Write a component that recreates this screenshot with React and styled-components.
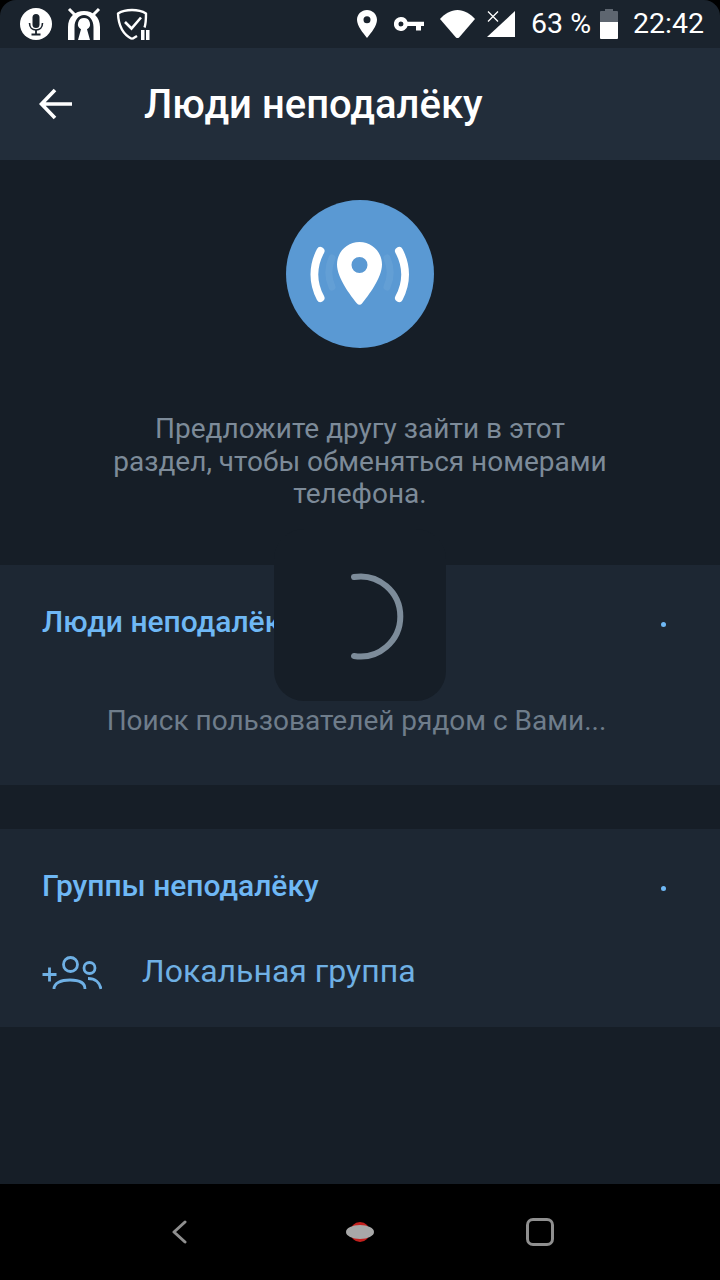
import React from 'react'
import styled, { createGlobalStyle } from 'styled-components'

const GlobalStyle = createGlobalStyle`
    html, body {
        margin: 0;
        padding: 0;
        background: #000;
    }
    * {
        box-sizing: border-box;
    }
`

const MicIcon = () => (
    <svg width="32" height="32" viewBox="0 0 32 32">
        <circle cx="16" cy="16" r="16" fill="#fff" />
        <rect x="12.500" y="6" width="7" height="14" rx="3.500" fill="#1a232d" />
        <path d="M9.500 15c0 4.500 2.800 7 6.500 7s6.500-2.500 6.500-7" fill="none" stroke="#1a232d" strokeWidth="1.600" />
        <path d="M16 22v3.500M11.500 26.500h9" stroke="#1a232d" strokeWidth="1.800" />
    </svg>
)

const KeyholeIcon = () => (
    <svg width="34" height="34" viewBox="0 0 34 34">
        <path d="M2 2l6 6M32 2l-6 6" stroke="#fff" strokeWidth="3" />
        <path fill="#fff" d="M1 33V20C1 10 8 4 17 4s16 6 16 16v13h-6.500V20c0-7-4-12-9.500-12S7.500 13 7.500 20v13z" />
        <path fill="#fff" d="M17 11a6 6 0 0 1 3 11.200L23 33H11l3-10.800A6 6 0 0 1 17 11z" />
    </svg>
)

const ShieldIcon = () => (
    <svg width="34" height="34" viewBox="0 0 34 34">
        <path d="M16 3c5 0 10 1 14 3.500 0 5 0 10-1.500 14M16 32C8 28 2.500 20 2 6.500 6 4 11 3 16 3" fill="none" stroke="#fff" strokeWidth="2.400" strokeLinejoin="round" />
        <path d="M9 15l6.500 6.500L25 10.500" fill="none" stroke="#fff" strokeWidth="2.600" />
        <path d="M16 32l5-3" stroke="#fff" strokeWidth="2.400" />
        <path d="M25 23h3.500v10H25zM30 23h3.500v10H30z" fill="#fff" />
    </svg>
)

const PinIcon = () => (
    <svg width="20" height="28" viewBox="0 0 20 28">
        <path fillRule="evenodd" fill="#fff" d="M10 0c5.500 0 10 4.400 10 9.800C20 16 14 23 10 28 6 23 0 16 0 9.800 0 4.400 4.500 0 10 0zm0 6.300a3.500 3.500 0 1 0 0 7 3.500 3.500 0 0 0 0-7z" />
    </svg>
)

const KeyIcon = () => (
    <svg width="30" height="14" viewBox="0 0 30 14">
        <path fillRule="evenodd" fill="#fff" d="M7 0a7 7 0 0 1 6.600 4.800H30V9h-3v4.500h-5V9h-8.400A7 7 0 1 1 7 0zm0 4.500a2.500 2.500 0 1 0 0 5 2.500 2.500 0 0 0 0-5z" />
    </svg>
)

const WifiIcon = () => (
    <svg width="35" height="28" viewBox="0 0 35 28">
        <path fill="#fff" d="M0 9C5 3.500 11 0 17.500 0S30 3.500 35 9L19.500 27a2.700 2.700 0 0 1-4 0z" />
    </svg>
)

const SignalIcon = () => (
    <svg width="28" height="26" viewBox="0 0 28 26">
        <path fill="#fff" d="M28 0v26H0z" />
        <path d="M1 .5l10 10M11 .5l-10 10" stroke="#fff" strokeWidth="1.300" />
    </svg>
)

const BatteryIcon = () => (
    <svg width="18" height="30" viewBox="0 0 18 30">
        <path fill="#5e6670" d="M5 0h8v2h4a1 1 0 0 1 1 1v10H0V3a1 1 0 0 1 1-1h4z" />
        <path fill="#fff" d="M0 13h18v16a1 1 0 0 1-1 1H1a1 1 0 0 1-1-1z" />
    </svg>
)

const BackIcon = () => (
    <svg width="34" height="32" viewBox="0 0 34 32">
        <path d="M33 16H3M16 2L2.500 16 16 30" fill="none" stroke="#fff" strokeWidth="3.600" />
    </svg>
)

const LocationBadge = () => (
    <svg width="148" height="148" viewBox="0 0 148 148">
        <circle cx="74" cy="74" r="74" fill="#5a99d3" />
        <path d="M34.500 51c-8 15-8 32 0 47M113 51c8 15 8 32 0 47" fill="none" stroke="#fff" strokeWidth="8" strokeLinecap="round" />
        <path d="M46 58c-4 9-4 20 0 29M101 58c4 9 4 20 0 29" fill="none" stroke="#fff" strokeOpacity="0.06" strokeWidth="7" strokeLinecap="round" />
        <path fillRule="evenodd" fill="#fff" d="M73.500 42C86 42 96 52 96 64.500 96 78 82 96 76 103.500a3.200 3.200 0 0 1-5 0C65 96 51 78 51 64.500 51 52 61 42 73.500 42zm0 15a8 8 0 1 0 0 16 8 8 0 0 0 0-16z" />
    </svg>
)

const AddPeopleIcon = () => (
    <svg width="60" height="34" viewBox="0 0 60 34">
        <path d="M.5 18.500h14M7.500 11.500v14" stroke="#6fb0e4" strokeWidth="2.800" />
        <circle cx="28.500" cy="8.500" r="7" fill="none" stroke="#6fb0e4" strokeWidth="2.800" />
        <circle cx="47.500" cy="12" r="5.500" fill="none" stroke="#6fb0e4" strokeWidth="2.800" />
        <path d="M12 33c0-6 7-9 16-9s15 3 15 9" fill="none" stroke="#6fb0e4" strokeWidth="2.800" />
        <path d="M46 22.500c7 0 12 4 13 10.500" fill="none" stroke="#6fb0e4" strokeWidth="2.800" />
    </svg>
)

const Spinner = () => (
    <svg width="60" height="92" viewBox="0 0 60 92">
        <path d="M6 8A40 40 0 1 1 6 87" fill="none" stroke="#7d8c9a" strokeWidth="6" strokeLinecap="round" />
    </svg>
)

export default function App() {
    return (
        <Screen>
            <GlobalStyle />
            <StatusBar>
                <StatusGroup>
                    <MicIcon />
                    <KeyholeIcon />
                    <ShieldIcon />
                </StatusGroup>
                <StatusRight>
                    <Slot><PinIcon /></Slot>
                    <Slot $left={17}><KeyIcon /></Slot>
                    <Slot $left={16}><WifiIcon /></Slot>
                    <Slot $left={12}><SignalIcon /></Slot>
                    <Slot $left={16}><StatusText>63 %</StatusText></Slot>
                    <Slot $left={9}><BatteryIcon /></Slot>
                    <Slot $left={15}><StatusText>22:42</StatusText></Slot>
                </StatusRight>
            </StatusBar>
            <Toolbar>
                <BackButton><BackIcon /></BackButton>
                <Title>Люди неподалёку</Title>
            </Toolbar>
            <Content>
                <Intro>
                    <LocationBadge />
                    <Hint>Предложите другу зайти в этот раздел, чтобы обменяться номерами телефона.</Hint>
                </Intro>
                <PeopleSection>
                    <SectionHeader>
                        <SectionTitle>Люди неподалёку</SectionTitle>
                        <Dot />
                    </SectionHeader>
                    <SearchText>Поиск пользователей рядом с Вами...</SearchText>
                </PeopleSection>
                <GroupsSection>
                    <SectionHeader>
                        <SectionTitle>Группы неподалёку</SectionTitle>
                        <Dot />
                    </SectionHeader>
                    <GroupRow>
                        <AddPeopleIcon />
                        <GroupLabel>Локальная группа</GroupLabel>
                    </GroupRow>
                </GroupsSection>
                <LoadingCard><Spinner /></LoadingCard>
            </Content>
            <NavBar>
                <NavBack>
                    <svg width="16" height="24" viewBox="0 0 16 24">
                        <path d="M14 2L3 12l11 10" fill="none" stroke="#8f8f8f" strokeWidth="3" strokeLinecap="round" strokeLinejoin="round" />
                    </svg>
                </NavBack>
                <NavHome />
                <NavSquare />
            </NavBar>
            <CornerMask />
        </Screen>
    )
}

const Screen = styled.div`
    position: relative;
    width: 720px;
    height: 1280px;
    display: flex;
    flex-direction: column;
    overflow: hidden;
    background: #161e27;
    font-family: Roboto, "Noto Sans", sans-serif;
`
const CornerMask = styled.div`
    position: absolute;
    inset: -14px -14px auto;
    height: 60px;
    border: 14px solid #000;
    border-bottom: none;
    border-radius: 30px 30px 0 0;
    pointer-events: none;
`
const StatusBar = styled.div`
    height: 48px;
    flex: none;
    display: flex;
    align-items: center;
    justify-content: space-between;
    padding: 0 16px 0 20px;
    background: #1a232d;
`
const StatusGroup = styled.div`
    display: flex;
    align-items: center;
    gap: 15px;
`
const StatusRight = styled.div`
    display: flex;
    align-items: center;
`
const Slot = styled.span`
    display: flex;
    margin-left: ${p => p.$left || 0}px;
`
const StatusText = styled.span`
    color: #fff;
    font-size: 28.500px;
    line-height: 32px;
`
const Toolbar = styled.header`
    height: 112px;
    flex: none;
    display: flex;
    align-items: center;
    background: #222d3a;
`
const BackButton = styled.div`
    width: 144px;
    padding-left: 39px;
    display: flex;
`
const Title = styled.h1`
    margin: 0;
    color: #fff;
    font-size: 40px;
    font-weight: 500;
`
const Content = styled.main`
    position: relative;
    flex: 1;
    display: flex;
    flex-direction: column;
`
const Intro = styled.div`
    height: 405px;
    padding-top: 40px;
    display: flex;
    flex-direction: column;
    align-items: center;
`
const Hint = styled.p`
    width: 500px;
    margin: 65px 0 0;
    color: #7d8b99;
    font-size: 28px;
    line-height: 32.500px;
    text-align: center;
`
const PeopleSection = styled.section`
    height: 220px;
    background: #1d2733;
`
const GroupsSection = styled.section`
    height: 198px;
    margin-top: 44px;
    background: #1d2733;
`
const SectionHeader = styled.div`
    height: 113px;
    padding: 0 54px 0 42px;
    display: flex;
    align-items: center;
    justify-content: space-between;
`
const SectionTitle = styled.h2`
    margin: 0;
    color: #6fb8f5;
    font-size: 30px;
    font-weight: 500;
`
const Dot = styled.span`
    width: 5px;
    height: 5px;
    margin-top: 6px;
    border-radius: 50%;
    background: #6fb8f5;
`
const SearchText = styled.p`
    margin: 27px 0 0;
    padding-right: 7px;
    color: #6f7d8b;
    font-size: 28px;
    line-height: 32px;
    text-align: center;
`
const GroupRow = styled.div`
    display: flex;
    align-items: center;
    gap: 40px;
    padding: 10px 0 0 42px;
`
const GroupLabel = styled.span`
    padding-bottom: 4px;
    color: #6fb0e4;
    font-size: 32px;
`
const LoadingCard = styled.div`
    position: absolute;
    left: 274px;
    top: 369px;
    width: 172px;
    height: 172px;
    display: flex;
    align-items: center;
    padding-left: 74px;
    border-radius: 30px;
    background: #161e27;
`
const NavBar = styled.nav`
    height: 96px;
    flex: none;
    display: flex;
    align-items: center;
    background: #000;
`
const NavBack = styled.div`
    margin-left: 171px;
    width: 16px;
    display: flex;
`
const NavHome = styled.div`
    position: relative;
    margin-left: 163px;
    width: 20px;
    height: 20px;
    border-radius: 50%;
    background: #c4201d;
    &::before {
        content: "";
        position: absolute;
        left: -4px;
        top: 3px;
        width: 28px;
        height: 14px;
        border-radius: 50%;
        background: #a8a8a8;
    }
`
const NavSquare = styled.div`
    margin-left: 156px;
    width: 28px;
    height: 28px;
    border: 3px solid #8f8f8f;
    border-radius: 7px;
`
